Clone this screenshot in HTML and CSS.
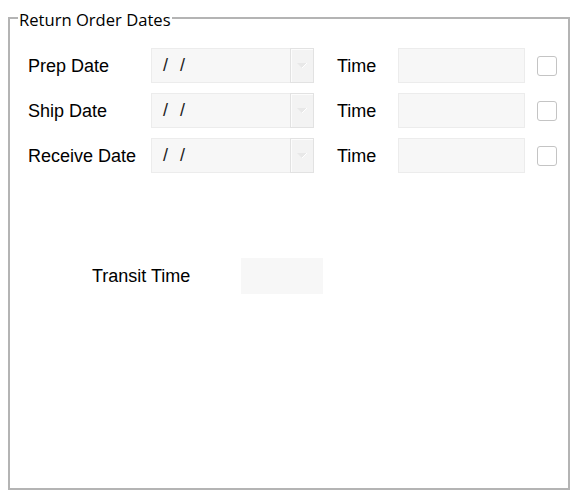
FILE: index.html
```html
<!DOCTYPE html>
<html>
<head>
<meta charset="utf-8">
<link rel="stylesheet" href="styles.css">
</head>
<body>
<div class="group">
  <span class="legend">Return Order Dates</span>
  <div class="rows">
    <div class="row">
      <span class="label">Prep Date</span>
      <div class="date"><span class="slashes">/ /</span><span class="drop"><svg width="12" height="7" viewBox="0 0 12 7"><path d="M1 1 L6 6 L11 1 Z" fill="#e8e8e8"/><path d="M6 6 L11 1" stroke="#ffffff" stroke-width="1"/></svg></span></div>
      <span class="tlabel">Time</span>
      <div class="time"></div>
      <span class="check"></span>
    </div>
    <div class="row">
      <span class="label">Ship Date</span>
      <div class="date"><span class="slashes">/ /</span><span class="drop"><svg width="12" height="7" viewBox="0 0 12 7"><path d="M1 1 L6 6 L11 1 Z" fill="#e8e8e8"/><path d="M6 6 L11 1" stroke="#ffffff" stroke-width="1"/></svg></span></div>
      <span class="tlabel">Time</span>
      <div class="time"></div>
      <span class="check"></span>
    </div>
    <div class="row">
      <span class="label">Receive Date</span>
      <div class="date"><span class="slashes">/ /</span><span class="drop"><svg width="12" height="7" viewBox="0 0 12 7"><path d="M1 1 L6 6 L11 1 Z" fill="#e8e8e8"/><path d="M6 6 L11 1" stroke="#ffffff" stroke-width="1"/></svg></span></div>
      <span class="tlabel">Time</span>
      <div class="time"></div>
      <span class="check"></span>
    </div>
  </div>
  <div class="transit">
    <span class="trlabel">Transit Time</span>
    <div class="trbox"></div>
  </div>
</div>
</body>
</html>
```
FILE: styles.css
```css
html, body {
  margin: 0;
  padding: 0;
  background: #ffffff;
}
body {
  width: 575px;
  height: 496px;
  overflow: hidden;
  font-family: "Liberation Sans", Arial, sans-serif;
  color: #000000;
}
.group {
  position: relative;
  box-sizing: border-box;
  width: 562px;
  height: 473px;
  margin: 17px 0 0 8px;
  border: 2px solid #b4b4b4;
  padding: 29px 0 0 18px;
}
.legend {
  position: absolute;
  top: -10px;
  left: 8px;
  padding: 0 1px 0 1px;
  background: #ffffff;
  font-family: "Open Sans", "Noto Sans", sans-serif;
  font-size: 16.6px;
  line-height: 21px;
  color: #000000;
}
.rows {
  display: flex;
  flex-direction: column;
  gap: 10px;
}
.row {
  display: flex;
  align-items: center;
  height: 35px;
}
.label {
  width: 123px;
  font-size: 18px;
  line-height: 20px;
}
.date {
  box-sizing: border-box;
  width: 163px;
  height: 35px;
  display: flex;
  align-items: center;
  background: #f7f7f7;
  border: 1px solid #ececec;
}
.slashes {
  flex: 1;
  padding-left: 11px;
  font-size: 18px;
  word-spacing: 7px;
  color: #222222;
}
.drop {
  box-sizing: border-box;
  width: 24px;
  height: 35px;
  margin: -1px -1px -1px 0;
  display: flex;
  align-items: center;
  justify-content: center;
  background: #f3f3f3;
  border: 1px solid #e2e2e2;
  box-shadow: inset 1px 1px 0 #fcfcfc;
}
.tlabel {
  margin-left: 23px;
  width: 61px;
  font-size: 18px;
  line-height: 20px;
}
.time {
  box-sizing: border-box;
  width: 127px;
  height: 35px;
  background: #f7f7f7;
  border: 1px solid #ececec;
}
.check {
  box-sizing: border-box;
  margin-left: 12px;
  width: 20px;
  height: 20px;
  border: 1px solid #c4c4c4;
  border-radius: 3px;
  background: #ffffff;
}
.transit {
  display: flex;
  align-items: center;
  margin-top: 85px;
  padding-left: 64px;
  height: 36px;
}
.trlabel {
  width: 149px;
  font-size: 18px;
  line-height: 20px;
}
.trbox {
  width: 82px;
  height: 36px;
  background: #f7f7f7;
}
```
